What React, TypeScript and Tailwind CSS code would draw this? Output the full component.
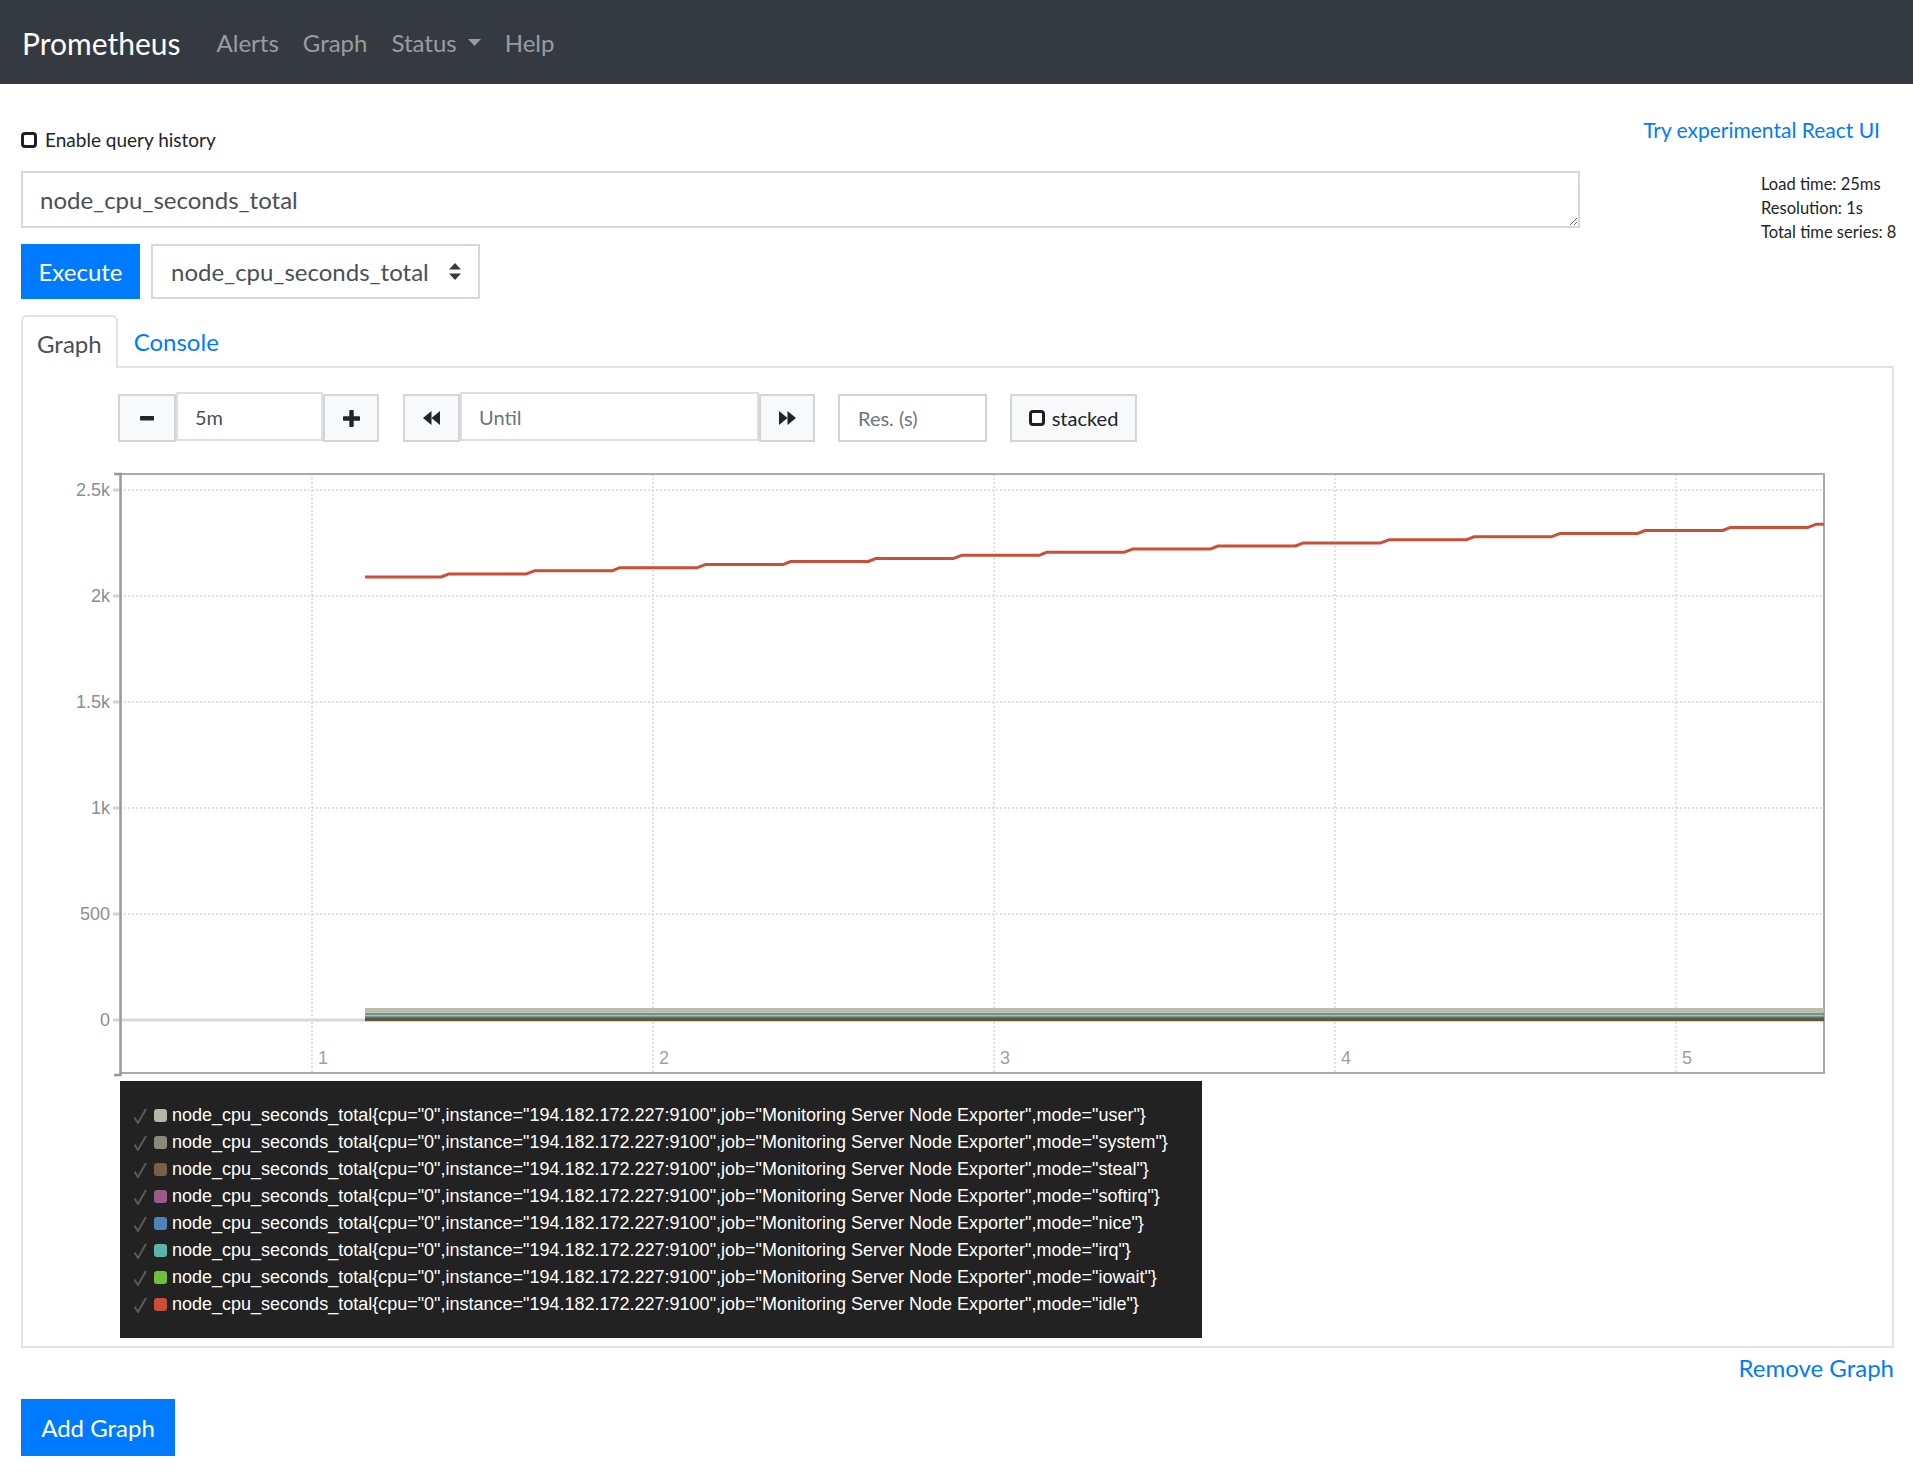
import React from "react";

const MODES = [
  { mode: "user", color: "#b5b6a6" },
  { mode: "system", color: "#8a8b79" },
  { mode: "steal", color: "#7b5f45" },
  { mode: "softirq", color: "#9c5a86" },
  { mode: "nice", color: "#4a84bb" },
  { mode: "irq", color: "#5bb5aa" },
  { mode: "iowait", color: "#6ebf3c" },
  { mode: "idle", color: "#cb4e36" },
];

const Y_TICKS = [
  { label: "2.5k", y: 490 },
  { label: "2k", y: 596 },
  { label: "1.5k", y: 702 },
  { label: "1k", y: 808 },
  { label: "500", y: 914 },
  { label: "0", y: 1020 },
];

const X_TICKS = [
  { label: "1", x: 312 },
  { label: "2", x: 653 },
  { label: "3", x: 994 },
  { label: "4", x: 1335 },
  { label: "5", x: 1676 },
];

function Caret() {
  return (
    <svg width="13" height="8" viewBox="0 0 13 8" className="ml-[11px]">
      <path d="M0 0 H13 L6.5 7 Z" fill="currentColor" />
    </svg>
  );
}

function SquareBox() {
  return <div className="w-[16px] h-[16px] border-[3px] border-[#1f1f1f] rounded-[4px] bg-white shrink-0" />;
}

function MinusIcon() {
  return (
    <svg width="14" height="5" viewBox="0 0 14 5">
      <rect x="0" y="0" width="14" height="4.5" rx="0.8" fill="#212529" />
    </svg>
  );
}

function PlusIcon() {
  return (
    <svg width="17" height="17" viewBox="0 0 17 17">
      <rect x="0" y="6.3" width="17" height="4.4" rx="0.8" fill="#212529" />
      <rect x="6.3" y="0" width="4.4" height="17" rx="0.8" fill="#212529" />
    </svg>
  );
}

function BackIcon() {
  return (
    <svg width="17" height="14" viewBox="0 0 17 14">
      <path d="M8.5 0 V14 L0 7 Z" fill="#212529" />
      <path d="M17 0 V14 L8.5 7 Z" fill="#212529" />
    </svg>
  );
}

function ForwardIcon() {
  return (
    <svg width="17" height="14" viewBox="0 0 17 14">
      <path d="M0 0 V14 L8.5 7 Z" fill="#212529" />
      <path d="M8.5 0 V14 L17 7 Z" fill="#212529" />
    </svg>
  );
}

function SelectArrows() {
  return (
    <svg width="12" height="17" viewBox="0 0 12 17">
      <path d="M6 0 L12 6.5 H0 Z" fill="#343a40" />
      <path d="M0 10.5 H12 L6 17 Z" fill="#343a40" />
    </svg>
  );
}

function Check() {
  return (
    <svg width="14" height="16" viewBox="0 0 14 16" className="shrink-0">
      <path d="M1.5 9.5 L5 15 L13 1" stroke="#5a5a5a" strokeWidth="2" fill="none" />
    </svg>
  );
}

function Chart() {
  let y = 577;
  let idle = `M365 ${y}`;
  for (let k = 0; k < 17; k++) {
    const x = 445 + k * 85.44;
    idle += ` L${(x - 4).toFixed(1)} ${y.toFixed(1)}`;
    y -= 3.1;
    idle += ` L${(x + 4).toFixed(1)} ${y.toFixed(1)}`;
  }
  idle += ` L1824 ${y.toFixed(1)}`;

  const low = [
    { y: 1010, w: 4, c: "#bcbdad" },
    { y: 1014, w: 3, c: "#8a8b79" },
    { y: 1016.5, w: 1.5, c: "#5bb5aa" },
    { y: 1017.5, w: 1.5, c: "#4a84bb" },
    { y: 1018.5, w: 1.5, c: "#9c5a86" },
    { y: 1019.5, w: 3.5, c: "#6e5437" },
  ];

  return (
    <svg width="1830" height="620" className="block">
      <g transform="translate(-23 -460)" fontFamily="'Liberation Sans', Arial, sans-serif" fontSize="18">
        {Y_TICKS.map((t) => (
          <line key={t.label} x1={120} x2={1824} y1={t.y} y2={t.y} stroke="#c4c4c4" strokeWidth="1" strokeDasharray="2 2" />
        ))}
        {X_TICKS.map((t) => (
          <line key={t.label} x1={t.x} x2={t.x} y1={474} y2={1072} stroke="#c4c4c4" strokeWidth="1" strokeDasharray="2 2" />
        ))}
        <line x1={120} x2={365} y1={1020} y2={1020} stroke="#d9d9d9" strokeWidth="3" />
        {/* plot frame */}
        <path d="M120 474 H1824 V1073 H120" stroke="#ababab" strokeWidth="2" fill="none" />
        {/* y axis */}
        <path d="M114 474 H120.5 V1075 H114" stroke="#999" strokeWidth="2.5" fill="none" />
        {Y_TICKS.map((t) => (
          <g key={t.label}>
            <line x1={113} x2={119} y1={t.y} y2={t.y} stroke="#d2d2d2" strokeWidth="3" />
            <text x={110} y={t.y} textAnchor="end" dominantBaseline="central" fill="#8e8e8e">
              {t.label}
            </text>
          </g>
        ))}
        {X_TICKS.map((t) => (
          <text key={t.label} x={t.x + 6} y={1058} dominantBaseline="central" fill="#a0a0a0">
            {t.label}
          </text>
        ))}
        {low.map((l, i) => (
          <line key={i} x1={365} x2={1824} y1={l.y} y2={l.y} stroke={l.c} strokeWidth={l.w} />
        ))}
        <path d={idle} stroke="#cb4e36" strokeWidth="3" fill="none" strokeLinejoin="round" />
      </g>
    </svg>
  );
}

function Legend() {
  return (
    <div className="ml-[97px] mt-[1px] w-[1082px] h-[257px] bg-[#222222] pt-[21px] pl-[13px] font-['Liberation_Sans',Arial,sans-serif] text-[18px] leading-[27px] text-white">
      {MODES.map((m) => (
        <div key={m.mode} className="flex items-center h-[27px] whitespace-nowrap">
          <Check />
          <span className="w-[13px] h-[13px] rounded-[3px] ml-[7px] mr-[5px] shrink-0" style={{ backgroundColor: m.color }} />
          <span>
            node_cpu_seconds_total{"{"}cpu="0",instance="194.182.172.227:9100",job="Monitoring Server Node Exporter",mode="{m.mode}"{"}"}
          </span>
        </div>
      ))}
    </div>
  );
}

function Controls() {
  const btn = "h-[48px] mt-[2px] bg-[#f8f9fa] border-2 border-[#d3d5d8] flex items-center justify-center";
  return (
    <div className="flex items-start h-[50px] ml-[95px] text-[20px]">
      <div className={`${btn} w-[58px]`}>
        <MinusIcon />
      </div>
      <div className="h-[49px] w-[147px] border-2 border-[#dcdee1] bg-white flex items-center pl-[17px] text-[#495057]">5m</div>
      <div className={`${btn} w-[56px]`}>
        <PlusIcon />
      </div>
      <div className={`${btn} w-[57px] ml-[24px]`}>
        <BackIcon />
      </div>
      <div className="h-[49px] w-[299px] border-2 border-[#dcdee1] bg-white flex items-center pl-[17px] text-[#6c757d]">Until</div>
      <div className={`${btn} w-[56px]`}>
        <ForwardIcon />
      </div>
      <div className="h-[48px] mt-[2px] w-[149px] ml-[23px] border-2 border-[#d3d5d8] bg-white flex items-center pl-[18px] text-[#6c757d]">
        Res. (s)
      </div>
      <div className={`${btn} w-[127px] ml-[23px] gap-[7px] text-[#212529]`}>
        <SquareBox />
        <span>stacked</span>
      </div>
    </div>
  );
}

export default function App() {
  return (
    <div className="min-h-screen bg-white font-['Lato','Noto_Sans',sans-serif] text-[#212529]">
      <nav className="h-[84px] bg-[#343a40] flex items-center pl-[22px] pt-[2px]">
        <span className="text-[30px] text-white mr-[24px] leading-none">Prometheus</span>
        <div className="flex items-center text-[24px] text-white/50">
          <span className="px-[12px]">Alerts</span>
          <span className="px-[12px]">Graph</span>
          <span className="px-[12px] flex items-center">
            Status
            <Caret />
          </span>
          <span className="px-[12px]">Help</span>
        </div>
      </nav>

      <div className="pl-[21px] pr-[19px] pt-[28px]">
        <div className="flex justify-between items-start h-[59px]">
          <label className="mt-[13px] flex items-center h-[30px] gap-[8px] text-[19px]">
            <SquareBox />
            <span>Enable query history</span>
          </label>
          <a className="text-[21px] leading-[36px] text-[#007bff] mr-[14px]">Try experimental React UI</a>
        </div>

        <div className="flex items-start">
          <div className="w-[1559px] shrink-0">
            <textarea
              readOnly
              defaultValue="node_cpu_seconds_total"
              className="block w-full h-[57px] border-2 border-[#d5d8dc] px-[17px] py-[9px] text-[24px] leading-[36px] text-[#495057] resize-y overflow-hidden outline-none"
            />
            <div className="flex mt-[16px] gap-[11px]">
              <div className="w-[119px] h-[55px] bg-[#007bff] text-white text-[24px] flex items-center justify-center">Execute</div>
              <div className="w-[329px] h-[55px] border-2 border-[#d5d8dc] flex items-center justify-between pl-[18px] pr-[17px] text-[24px] text-[#495057]">
                <span>node_cpu_seconds_total</span>
                <SelectArrows />
              </div>
            </div>
          </div>
          <div className="ml-[181px] mt-[1px] text-[16.5px] leading-[24px] whitespace-nowrap">
            <div>Load time: 25ms</div>
            <div>Resolution: 1s</div>
            <div>Total time series: 8</div>
          </div>
        </div>

        <div className="mt-[16px] flex items-end h-[53px] border-b-2 border-[#e0e2e5] text-[24px]">
          <div className="h-[53px] -mb-[2px] px-[14px] pt-[2px] flex items-center border-2 border-b-0 border-[#e0e2e5] rounded-t-[6px] bg-white text-[#495057]">
            Graph
          </div>
          <div className="h-[51px] px-[16px] pt-[2px] flex items-center text-[#007bff]">Console</div>
        </div>

        <div className="border-x-2 border-b-2 border-[#e0e2e5] pt-[24px] pb-[8px]">
          <Controls />
          <div className="mt-[18px]">
            <Chart />
          </div>
          <Legend />
        </div>

        <div className="flex justify-end mt-[2px]">
          <a className="text-[24px] leading-[36px] text-[#007bff]">Remove Graph</a>
        </div>

        <div className="mt-[13px] w-[154px] h-[57px] bg-[#007bff] text-white text-[24px] flex items-center justify-center">
          Add Graph
        </div>
      </div>
    </div>
  );
}
